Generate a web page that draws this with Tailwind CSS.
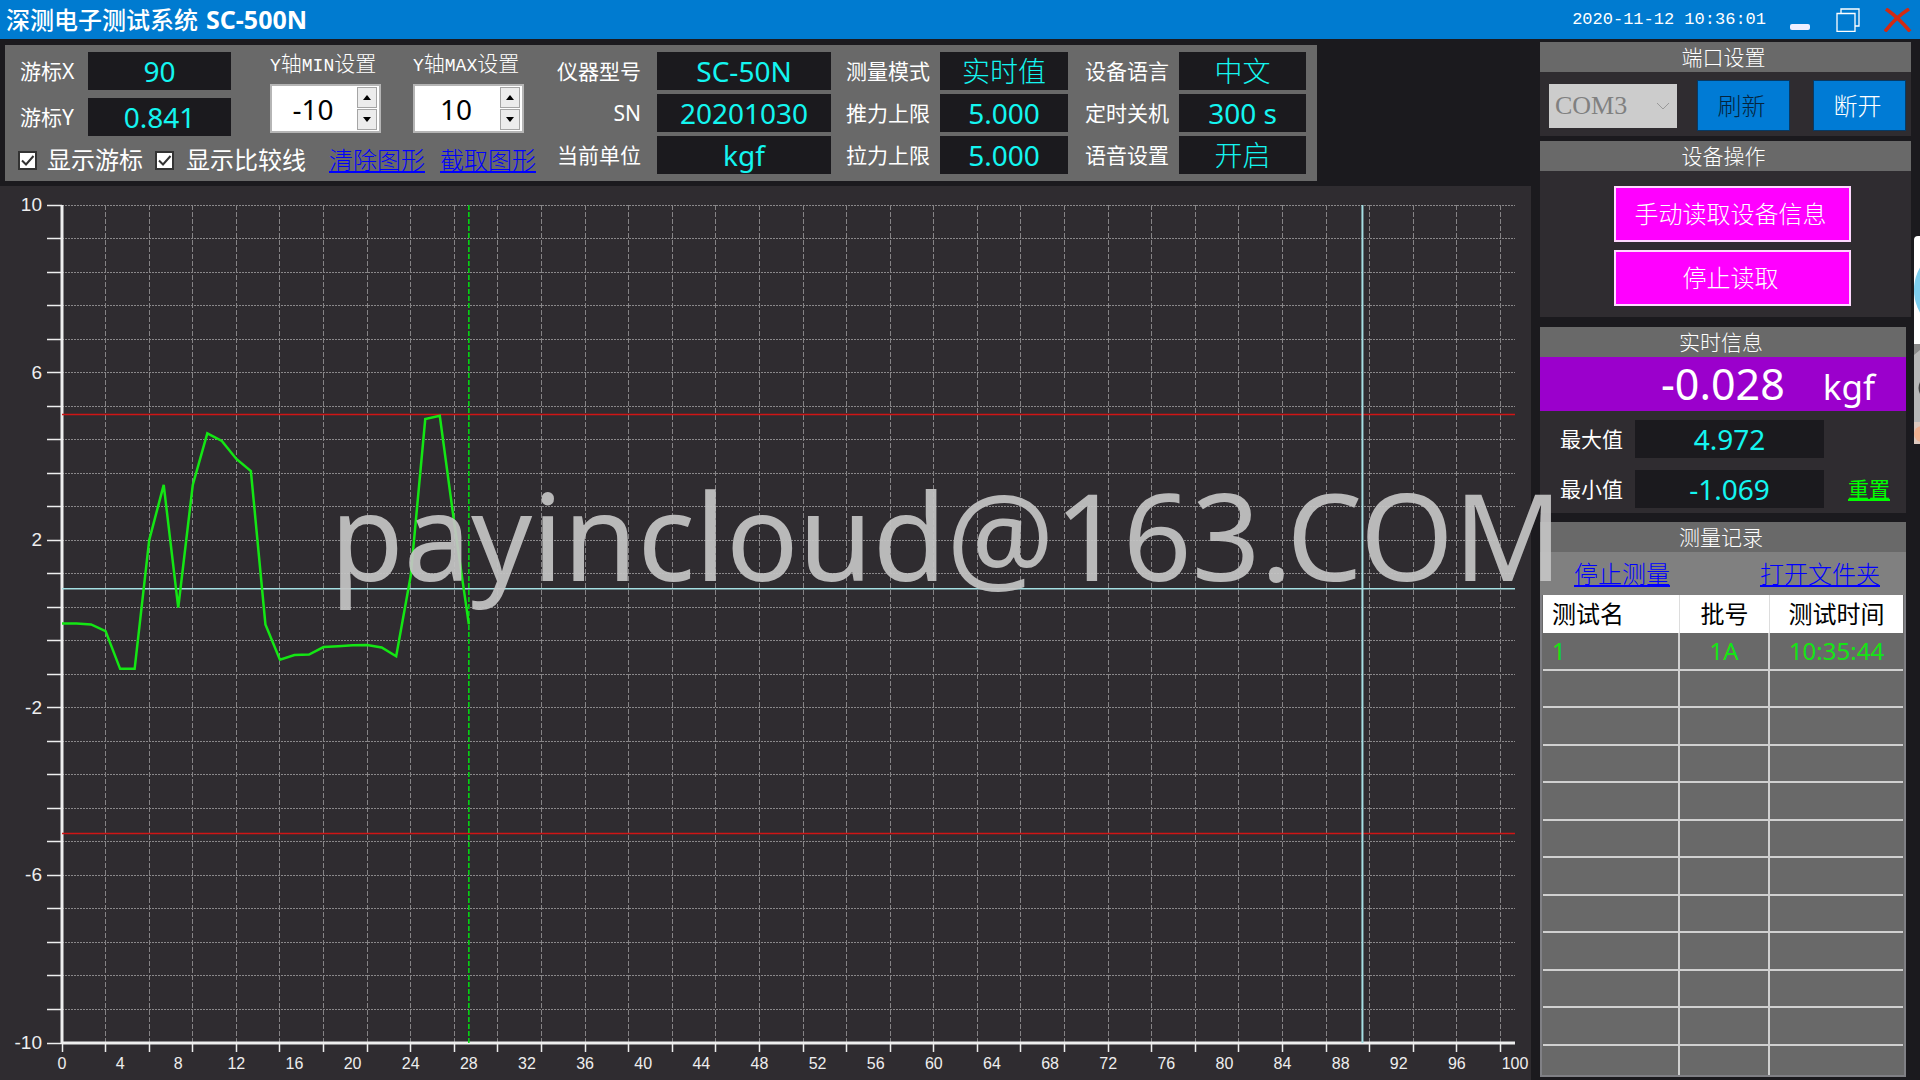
<!DOCTYPE html>
<html lang="zh-CN">
<head>
<meta charset="utf-8">
<title>深测电子测试系统 SC-500N</title>
<script src="https://cdn.jsdelivr.net/npm/@tailwindcss/browser@4"></script>
</head>
<body class="bg-[#1b1a1e] font-['Noto_Sans','Noto_Sans_CJK_SC',sans-serif] text-white">
<div class="relative flex h-screen min-h-[900px] flex-col overflow-hidden">

  <header class="flex h-[39px] shrink-0 items-center bg-[#007bd0] pl-1.5 pr-2">
    <h1 class="flex flex-1 items-baseline gap-2 text-2xl leading-none"><span class="font-medium">深测电子测试系统</span><b class="text-[25px] leading-none font-bold">SC-500N</b></h1>
    <time class="mr-6 font-['Liberation_Mono',monospace] text-[17px] leading-none">2020-11-12 10:36:01</time>
    <div class="flex items-center gap-6">
      <button aria-label="最小化" class="h-6 w-5"><svg viewBox="0 0 20 24" class="h-6 w-5"><rect x="0" y="16" width="20" height="6" rx="2" fill="#eef"/></svg></button>
      <button aria-label="还原" class="ml-0.5 h-6 w-6"><svg viewBox="0 0 24 24" class="h-6 w-6" fill="none" stroke="#fff" stroke-width="1.3"><path d="M1 5.500h18v18H1zM5 5V1h18v17h-4"/></svg></button>
      <button aria-label="关闭" class="h-6 w-7"><svg viewBox="0 0 28 24" class="h-6 w-7" fill="none" stroke="#d22a12" stroke-width="3.600"><path d="M2 1Q15 10 26 23.500M25 1Q12 9 1 23.500"/></svg></button>
    </div>
  </header>

  <div class="flex min-h-0 flex-1 pr-[9px]">
    <main class="flex min-w-0 flex-1 flex-col pt-1.5">
      <section class="ml-[5px] flex h-[136px] w-fit items-start bg-[#696969] pr-[11px]">
        <div class="w-[543px]">
          <div class="flex pt-[7px]">
            <dl class="ml-[15px] grid grid-cols-[68px_143px] gap-y-2 text-[21px]">
              <dt class="leading-[38px]">游标X</dt><dd class="h-[38px] bg-[#1b1a1e] text-center text-[28px] leading-[38px] text-[#14f5f0]">90</dd>
              <dt class="leading-[38px]">游标Y</dt><dd class="h-[38px] bg-[#1b1a1e] text-center text-[28px] leading-[38px] text-[#14f5f0]">0.841</dd>
            </dl>
            <div class="ml-[39px] w-[111px]">
              <label for="ymin" class="block h-6 whitespace-nowrap text-[21px] font-light leading-[22px]"><span class="font-['Liberation_Mono',monospace] text-lg leading-none">Y</span>轴<span class="font-['Liberation_Mono',monospace] text-lg leading-none">MIN</span>设置</label>
              <div class="mt-2 flex h-[49px] border-2 border-[#b5b5b5] bg-white p-px">
                <input id="ymin" value="-10" class="w-[84px] pr-1 text-center text-[28px] leading-none text-black outline-none">
                <div class="grid w-5 gap-px">
                  <button aria-label="增加" class="flex items-center justify-center border border-[#a5a5a5] bg-[#ececec]"><svg viewBox="0 0 8 5" class="h-[5px] w-2"><path d="M4 0l4 5H0z"/></svg></button>
                  <button aria-label="减少" class="flex items-center justify-center border border-[#a5a5a5] bg-[#ececec]"><svg viewBox="0 0 8 5" class="h-[5px] w-2"><path d="M4 5l4-5H0z"/></svg></button>
                </div>
              </div>
            </div>
            <div class="ml-8 w-[111px]">
              <label for="ymax" class="block h-6 whitespace-nowrap text-[21px] font-light leading-[22px]"><span class="font-['Liberation_Mono',monospace] text-lg leading-none">Y</span>轴<span class="font-['Liberation_Mono',monospace] text-lg leading-none">MAX</span>设置</label>
              <div class="mt-2 flex h-[49px] border-2 border-[#b5b5b5] bg-white p-px">
                <input id="ymax" value="10" class="w-[84px] pr-1 text-center text-[28px] leading-none text-black outline-none">
                <div class="grid w-5 gap-px">
                  <button aria-label="增加" class="flex items-center justify-center border border-[#a5a5a5] bg-[#ececec]"><svg viewBox="0 0 8 5" class="h-[5px] w-2"><path d="M4 0l4 5H0z"/></svg></button>
                  <button aria-label="减少" class="flex items-center justify-center border border-[#a5a5a5] bg-[#ececec]"><svg viewBox="0 0 8 5" class="h-[5px] w-2"><path d="M4 5l4-5H0z"/></svg></button>
                </div>
              </div>
            </div>
          </div>
          <div class="ml-[13px] mt-2.5 flex h-7 items-center whitespace-nowrap text-2xl leading-7">
            <span class="relative size-[19px]">
              <input id="cur" type="checkbox" checked class="peer block size-[19px] appearance-none border-2 border-[#333] bg-white">
              <svg viewBox="0 0 19 19" class="pointer-events-none absolute inset-0 hidden size-[19px] peer-checked:block" fill="none" stroke="#333" stroke-width="2"><path d="M4 9.500l4 4L15.500 5"/></svg>
            </span>
            <label for="cur" class="ml-2.5">显示游标</label>
            <span class="relative ml-3 size-[19px]">
              <input id="cmp" type="checkbox" checked class="peer block size-[19px] appearance-none border-2 border-[#333] bg-white">
              <svg viewBox="0 0 19 19" class="pointer-events-none absolute inset-0 hidden size-[19px] peer-checked:block" fill="none" stroke="#333" stroke-width="2"><path d="M4 9.500l4 4L15.500 5"/></svg>
            </span>
            <label for="cmp" class="ml-3">显示比较线</label>
            <a href="#" class="ml-[23px] font-light text-[#0000ff] underline underline-offset-2">清除图形</a>
            <a href="#" class="ml-[15px] font-light text-[#0000ff] underline underline-offset-2">截取图形</a>
          </div>
        </div>
        <dl class="grid grid-cols-[109px_174px_109px_128px_111px_127px] gap-y-1 whitespace-nowrap pt-[7px] text-right text-[21px] leading-[38px] [&>dd]:h-[38px] [&>dd]:bg-[#1b1a1e] [&>dd]:text-center [&>dd]:text-[28px] [&>dd]:leading-[38px] [&>dd]:text-[#14f5f0]">
          <dt class="pr-4">仪器型号</dt><dd>SC-50N</dd>
          <dt class="pr-2.5">测量模式</dt><dd class="font-light">实时值</dd>
          <dt class="pr-2.5">设备语言</dt><dd class="font-light">中文</dd>
          <dt class="pr-4">SN</dt><dd>20201030</dd>
          <dt class="pr-2.5">推力上限</dt><dd>5.000</dd>
          <dt class="pr-2.5">定时关机</dt><dd>300 s</dd>
          <dt class="pr-4">当前单位</dt><dd>kgf</dd>
          <dt class="pr-2.5">拉力上限</dt><dd>5.000</dd>
          <dt class="pr-2.5">语音设置</dt><dd class="font-light">开启</dd>
        </dl>
      </section>
      <section class="mt-[5px] min-h-0 flex-1 bg-[#2f2c30]">
        <svg id="chart" role="img" aria-label="力值曲线" class="block h-full w-full font-['Liberation_Sans',sans-serif]"></svg>
      </section>
    </main>

    <aside class="ml-[9px] flex w-[371px] shrink-0 flex-col pt-[3px]">
      <section class="h-[94px] shrink-0 bg-[#2f2c30]">
        <h2 class="h-[30px] bg-[#696969] pr-1 text-center text-[21px] font-light leading-[30px]">端口设置</h2>
        <div class="flex items-center px-[5px] pt-2 pl-[9px]">
          <div class="relative">
            <select aria-label="端口" disabled class="h-[44px] w-[128px] appearance-none bg-[#cccccc] pl-1.5 font-['Liberation_Serif',serif] text-[26px] text-[#808080] opacity-100"><option>COM3</option></select>
            <svg viewBox="0 0 12 8" class="absolute right-2 top-[18px] h-2 w-3" fill="none" stroke="#999"><path d="M0 1l6 6 6-6"/></svg>
          </div>
          <button class="ml-5 h-[51px] w-[93px] border border-[#063a66] bg-[#007bd5] pr-1 text-2xl font-light text-[#05243d]">刷新</button>
          <button class="ml-[23px] h-[51px] w-[93px] border border-[#063a66] bg-[#007bd5] pr-1 text-2xl font-light">断开</button>
        </div>
      </section>
      <section class="mt-[5px] h-[176px] shrink-0 bg-[#2f2c30]">
        <h2 class="h-[30px] bg-[#696969] pr-1 text-center text-[21px] font-light leading-[30px]">设备操作</h2>
        <div class="ml-[74px] mt-[15px] flex w-[237px] flex-col gap-2">
          <button class="h-14 border-2 border-[#ffd9ff] bg-[#ff00ff] pr-1 text-2xl font-light">手动读取设备信息</button>
          <button class="h-14 border-2 border-[#ffd9ff] bg-[#ff00ff] pr-1 text-2xl font-light">停止读取</button>
        </div>
      </section>
      <section class="mr-[5px] mt-[10px] h-[186px] shrink-0 bg-[#2f2c30]">
        <h2 class="h-[30px] bg-[#696969] pr-1 text-center text-[21px] font-light leading-[30px]">实时信息</h2>
        <div class="flex h-[54px] items-baseline justify-end bg-[#9b00cc] pr-[31px] leading-[54px]">
          <output class="text-[43px] leading-[54px]">-0.028</output><span class="ml-[38px] text-[35px] leading-[54px]">kgf</span>
        </div>
        <dl class="grid grid-cols-[75px_189px] gap-y-3 pl-5 pt-[9px] text-[21px] leading-[38px]">
          <dt>最大值</dt><dd class="h-[38px] bg-[#1b1a1e] text-center text-[28px] leading-[38px] text-[#14f5f0]">4.972</dd>
          <dt>最小值</dt><dd class="relative h-[38px] bg-[#1b1a1e] text-center text-[28px] leading-[38px] text-[#14f5f0]">-1.069<a href="#" class="absolute left-[213px] top-0 whitespace-nowrap text-[21px] leading-[38px] text-[#00ff00] underline underline-offset-2">重置</a></dd>
        </dl>
      </section>
      <section class="mb-[3px] mr-[5px] mt-[9px] flex min-h-0 flex-1 flex-col bg-[#696969]">
        <h2 class="h-[30px] shrink-0 pr-1 text-center text-[21px] font-light leading-[30px]">测量记录</h2>
        <div class="flex h-[43px] shrink-0 items-center justify-between bg-[#808080] pl-[34px] pr-[26px] text-2xl font-light text-[#0000ff]">
          <a href="#" class="underline underline-offset-2">停止测量</a><a href="#" class="underline underline-offset-2">打开文件夹</a>
        </div>
        <div class="min-h-0 flex-1 border-2 border-t-0 border-[#808085] px-px">
          <table class="h-full w-full table-fixed border-separate border-spacing-0 text-2xl leading-none [&_td]:border-b-2 [&_td]:border-r-2 [&_td]:border-[#d0d0d0] [&_tr>*:last-child]:border-r-0 [&_tr:last-child>td]:border-b-0">
            <colgroup><col class="w-[137px]"><col class="w-[90px]"><col></colgroup>
            <thead><tr class="h-[38px] bg-white text-black [&>th]:border-r [&>th]:border-[#ddd] [&>th]:font-normal"><th class="pl-[9px] text-left">测试名</th><th>批号</th><th>测试时间</th></tr></thead>
            <tbody id="rows"><tr class="h-[37px] text-center text-[#14e614]"><td class="pl-[9px] text-left">1</td><td>1A</td><td>10:35:44</td></tr></tbody>
          </table>
        </div>
      </section>
    </aside>
  </div>

  <div class="absolute right-0 top-[236px] h-[208px] w-1.5 overflow-hidden rounded-tl bg-white">
    <svg viewBox="0 0 6 208" class="h-full w-full"><circle cx="45" cy="54" r="45" fill="#7fd0f0"/><path d="M0 108h6v78H0z" fill="#b8b8b8"/><path d="M0 108h6v6l-6 5z" fill="#8a8a8a"/><path d="M6 146q-3 6 0 12z" fill="#444"/><path d="M0 186h6v22H0z" fill="#dcc8be"/><circle cx="8" cy="198" r="8" fill="#f0b090"/></svg>
  </div>
  <p class="pointer-events-none absolute left-[330px] top-[455px] whitespace-nowrap text-[120px] leading-[160px] text-[#c4c4c4]/93">payincloud@163.COM</p>
</div>

<script>
  // Blank rows fill the record table down to the bottom of its panel.
  const rows = document.getElementById('rows');
  for (let i = 0; i < 11; i++) {
    const tr = document.createElement('tr');
    tr.innerHTML = '<td></td><td></td><td></td>';
    tr.className = i === 10 ? 'h-[29px]' : 'h-[37px]';
    rows.appendChild(tr);
  }

  const samples = [[0,.01],[1,.01],[2,-.01],[3,-.17],[4,-1.07],[5,-1.07],[6,2],[7,3.32],[8,.39],[9,3.32],[10,4.55],[11,4.37],[12,3.94],[13,3.65],[14,-.01],[15,-.85],[16,-.74],[17,-.73],[18,-.55],[19,-.53],[20,-.51],[21,-.5],[22,-.56],[23,-.77],[24,1.15],[25,4.89],[26,4.97],[27,2.4],[28,-.01]];
  const svg = document.getElementById('chart');
  function draw() {
    const { width: w, height: h } = svg.parentElement.getBoundingClientRect();
    if (w < 100 || h < 100) return;
    const L = 62, R = w - 16, T = 19, B = h - 37;
    const X = v => L + (R - L) * v / 100, Y = v => T + (B - T) * (10 - v) / 20;
    const line = (x1, y1, x2, y2, c, extra = '') => `<line x1="${x1}" y1="${y1}" x2="${x2}" y2="${y2}" stroke="${c}" ${extra}/>`;
    const snap = v => Math.floor(v) + 0.5;
    let s = '';
    for (let i = 0; i <= 25; i++) {
      const y = snap(Y(10 - i * 0.8));
      if (i < 25) s += line(L, y, R, y, '#8a888a', 'stroke-dasharray="2 1"');
      s += line(47, y, L, y, '#eee', 'stroke-width="1.500"');
    }
    for (let v = 0; v < 100; v += 3) {
      const x = snap(X(v));
      if (v) s += line(x, T, x, B, '#858385', 'stroke-dasharray="5 2"');
      s += line(x, B, x, B + 9, '#eee', 'stroke-width="1.500"');
    }
    s += line(L, T, L, B + 1, '#eee', 'stroke-width="3"') + line(L, B, R, B, '#eee', 'stroke-width="3"');
    for (const v of [5, -5]) s += line(L, snap(Y(v)), R, snap(Y(v)), '#d01515', 'stroke-width="1.500"');
    s += line(L, Y(.841), R, Y(.841), '#a5dfe3', 'stroke-width="1.500"') + line(X(89.5), T, X(89.5), B, '#a5dfe3', 'stroke-width="2"');
    s += line(X(28), T, X(28), B, '#00e010', 'stroke-width="1.500" stroke-dasharray="5 2"');
    s += `<polyline fill="none" stroke="#14e614" stroke-width="2.500" points="${samples.map(p => X(p[0]) + ',' + Y(p[1])).join(' ')}"/>`;
    for (const v of [10, 6, 2, -2, -6, -10]) s += `<text x="42" y="${Y(v) + 6}" text-anchor="end" font-size="19" fill="#eee">${v}</text>`;
    for (let v = 0; v <= 100; v += 4) s += `<text x="${X(v)}" y="${B + 26}" text-anchor="middle" font-size="16" fill="#eee">${v}</text>`;
    svg.innerHTML = s;
  }
  draw();
  new ResizeObserver(draw).observe(svg.parentElement);
</script>
</body>
</html>
